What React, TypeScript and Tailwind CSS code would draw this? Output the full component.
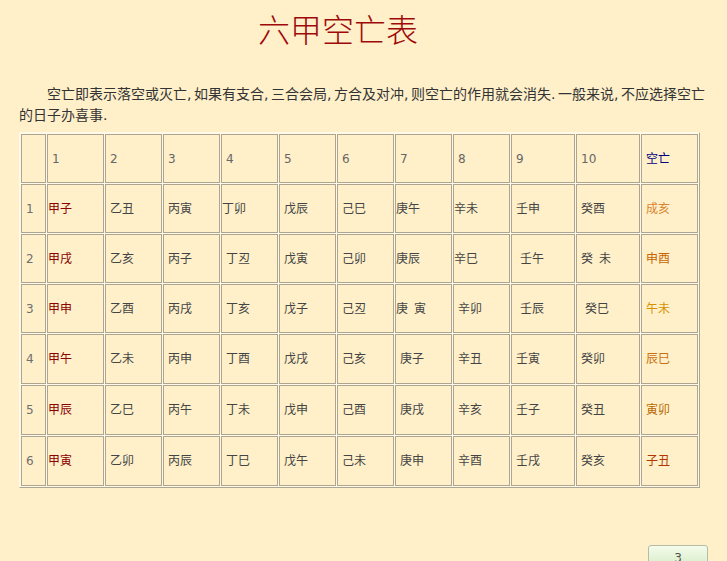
import React from "react";

type Cell = { t: string; p: number };

const FONT = { fontFamily: '"DejaVu Sans","Noto Sans CJK SC",sans-serif' };

const widths = ["w-[25px]", "w-[57px]", "w-[57px]", "w-[57px]", "w-[57px]", "w-[57px]", "w-[57px]", "w-[57px]", "w-[57px]", "w-[64px]", "w-[64px]", "w-[57px]"];

const rows: string[][] = [
  ["1", "甲子", "乙丑", "丙寅", "丁卯", "戊辰", "己巳", "庚午", "辛未", "壬申", "癸酉", "成亥"],
  ["2", "甲戌", "乙亥", "丙子", "丁丒", "戊寅", "己卯", "庚辰", "辛巳", "壬午", "癸\u2002未", "申酉"],
  ["3", "甲申", "乙酉", "丙戌", "丁亥", "戊子", "己丒", "庚\u2002寅", "辛卯", "壬辰", "癸巳", "午未"],
  ["4", "甲午", "乙未", "丙申", "丁酉", "戊戌", "己亥", "庚子", "辛丑", "壬寅", "癸卯", "辰巳"],
  ["5", "甲辰", "乙巳", "丙午", "丁未", "戊申", "己酉", "庚戌", "辛亥", "壬子", "癸丑", "寅卯"],
  ["6", "甲寅", "乙卯", "丙辰", "丁巳", "戊午", "己未", "庚申", "辛酉", "壬戌", "癸亥", "子丑"],
];

const pads: number[][] = [
  [4, 0, 4, 4, 0, 4, 4, 0, 0, 4, 4, 4],
  [4, 0, 4, 4, 4, 4, 4, 0, 0, 8, 4, 4],
  [4, 0, 4, 4, 4, 4, 4, 0, 4, 8, 8, 4],
  [4, 0, 4, 4, 4, 4, 4, 4, 4, 4, 4, 4],
  [4, 0, 4, 4, 4, 4, 4, 4, 4, 4, 4, 4],
  [4, 0, 4, 4, 4, 4, 4, 4, 4, 4, 4, 4],
];

const lastColors = ["text-[#DB8430]", "text-[#C86400]", "text-[#D89000]", "text-[#C87010]", "text-[#B86800]", "text-[#B03800]"];
const rowHeights = ["h-[49px]", "h-[49px]", "h-[49px]", "h-[50px]", "h-[50px]", "h-[50px]"];

const padClass = (p: number) => (p === 0 ? "pl-0" : p === 8 ? "pl-2" : "pl-1");

function P({ c }: { c: string }) {
  return <span className="inline-block w-[7px]">{c}</span>;
}

function Para({ text }: { text: string }) {
  const parts: React.ReactNode[] = [];
  let buf = "";
  let k = 0;
  for (const ch of text) {
    if (ch === "," || ch === ".") {
      if (buf) parts.push(<span key={k++}>{buf}</span>);
      buf = "";
      parts.push(<P key={k++} c={ch} />);
    } else buf += ch;
  }
  if (buf) parts.push(<span key={k++}>{buf}</span>);
  return <>{parts}</>;
}

export default function App() {
  const cellBase = "border border-[#ADA58F] bg-[#FFF0CA] align-middle pr-0 py-0 text-[12px] leading-[16px] whitespace-nowrap";
  return (
    <div className="w-[727px] h-[561px] overflow-hidden bg-[#FFF0CA]" style={FONT}>
      <h1
        className="pt-[8px] pl-[258px] text-[32px] leading-[40px] font-light text-[#9E0A0A] tracking-[0px]"
        style={{ fontFamily: '"Noto Sans CJK SC",sans-serif' }}
      >
        六甲空亡表
      </h1>
      <p className="mt-[36px] px-[19px] text-[14px] leading-[21px] text-[#333333] whitespace-nowrap">
        <span className="inline-block w-[28px]" />
        <Para text="空亡即表示落空或灭亡,如果有支合,三合会局,方合及对冲,则空亡的作用就会消失.一般来说,不应选择空亡" />
        <br />
        <Para text="的日子办喜事." />
      </p>
      <div className="mt-[6px] pl-[19px]">
        <table className="table-fixed w-[681px] border-separate border-spacing-[1px] bg-[#FFF9E8] border border-t-[#FFF9E8] border-l-[#FFF9E8] border-r-[#ADA58F] border-b-[#ADA58F]">
          <tbody>
            <tr>
              {["", "1", "2", "3", "4", "5", "6", "7", "8", "9", "10", "空亡"].map((h, i) => (
                <td
                  key={i}
                  className={`${cellBase} ${widths[i]} h-[49px] pl-1 ${i === 11 ? "text-[#000080]" : "text-[#666666]"}`}
                >
                  {h}
                </td>
              ))}
            </tr>
            {rows.map((r, ri) => (
              <tr key={ri}>
                {r.map((c, ci) => {
                  let color = "text-[#444444]";
                  if (ci === 0) color = "text-[#6E6E6E]";
                  else if (ci === 1) color = "text-[#8B0000]";
                  else if (ci === 11) color = lastColors[ri];
                  return (
                    <td key={ci} className={`${cellBase} ${rowHeights[ri]} ${padClass(pads[ri][ci])} ${color}`}>
                      {c}
                    </td>
                  );
                })}
              </tr>
            ))}
          </tbody>
        </table>
      </div>
      <div className="mt-[57px] flex justify-end pr-[19px]">
        <div className="w-[60px] h-[26px] border border-[#B5BDA6] rounded-t-[3px] bg-gradient-to-b from-[#F4FBEC] to-[#D3EBC0] text-[12px] leading-[24px] text-center text-[#555555]">
          3
        </div>
      </div>
    </div>
  );
}
